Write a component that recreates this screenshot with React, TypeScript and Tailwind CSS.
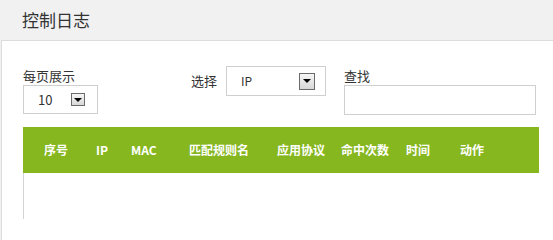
const font = { fontFamily: '"Noto Sans CJK SC", "Noto Sans", sans-serif' };

const Arrow = ({ size }: { size: string }) => (
    <span className={`${size} flex items-center justify-center border border-[#6b6b6b] bg-gradient-to-b from-[#f6f6f6] to-[#d8d8d8]`}>
        <span className="w-0 h-0 border-l-[4px] border-r-[4px] border-t-[4px] border-l-transparent border-r-transparent border-t-black" />
    </span>
)

const cols = [
    { name: "序号", w: "w-[52px]" },
    { name: "IP", w: "w-[35px]" },
    { name: "MAC", w: "w-[58px]" },
    { name: "匹配规则名", w: "w-[88px]" },
    { name: "应用协议", w: "w-[64px]" },
    { name: "命中次数", w: "w-[65px]" },
    { name: "时间", w: "w-[54px]" },
    { name: "动作", w: "w-[60px]" },
]

const App = () => {
    return (
        <div className="w-[553px] h-[240px] bg-[#f1f1f2] overflow-hidden text-[#333]" style={font}>
            <div className="h-[40px] pl-[22px] flex items-center text-[17px]">控制日志</div>
            <div className="ml-[1px] h-[200px] bg-white border-t border-l border-[#dcdcdc]">
                <div className="flex items-start pl-[21px] pt-[25px] text-[13px]">
                    <div className="flex flex-col w-[168px]">
                        <span className="leading-[19px]">每页展示</span>
                        <div className="w-[75px] h-[29px] border border-[#cfcfcf] flex items-center justify-between pl-[14px] pr-[12px]">
                            <span>10</span>
                            <Arrow size="w-[14px] h-[13px]" />
                        </div>
                    </div>
                    <div className="flex items-center w-[153px]">
                        <span className="w-[35px]">选择</span>
                        <div className="w-[100px] h-[30px] border border-[#cfcfcf] flex items-center justify-between pl-[14px] pr-[10px]">
                            <span className="text-[12px]">IP</span>
                            <Arrow size="w-[16px] h-[17px]" />
                        </div>
                    </div>
                    <div className="flex flex-col">
                        <span className="leading-[19px]">查找</span>
                        <div className="w-[192px] h-[30px] border border-[#cfcfcf]" />
                    </div>
                </div>
                <div className="ml-[21px] mt-[12px] w-[516px]">
                    <div className="h-[46px] bg-[#86b71f] flex items-center pl-[21px] text-white font-bold text-[12px]">
                        {cols.map(c => (
                            <span key={c.name} className={`${c.w} shrink-0`}>{c.name}</span>
                        ))}
                    </div>
                    <div className="h-[46px] border-l border-[#d4d4d4]" />
                </div>
            </div>
        </div>
    )
}
export default App
